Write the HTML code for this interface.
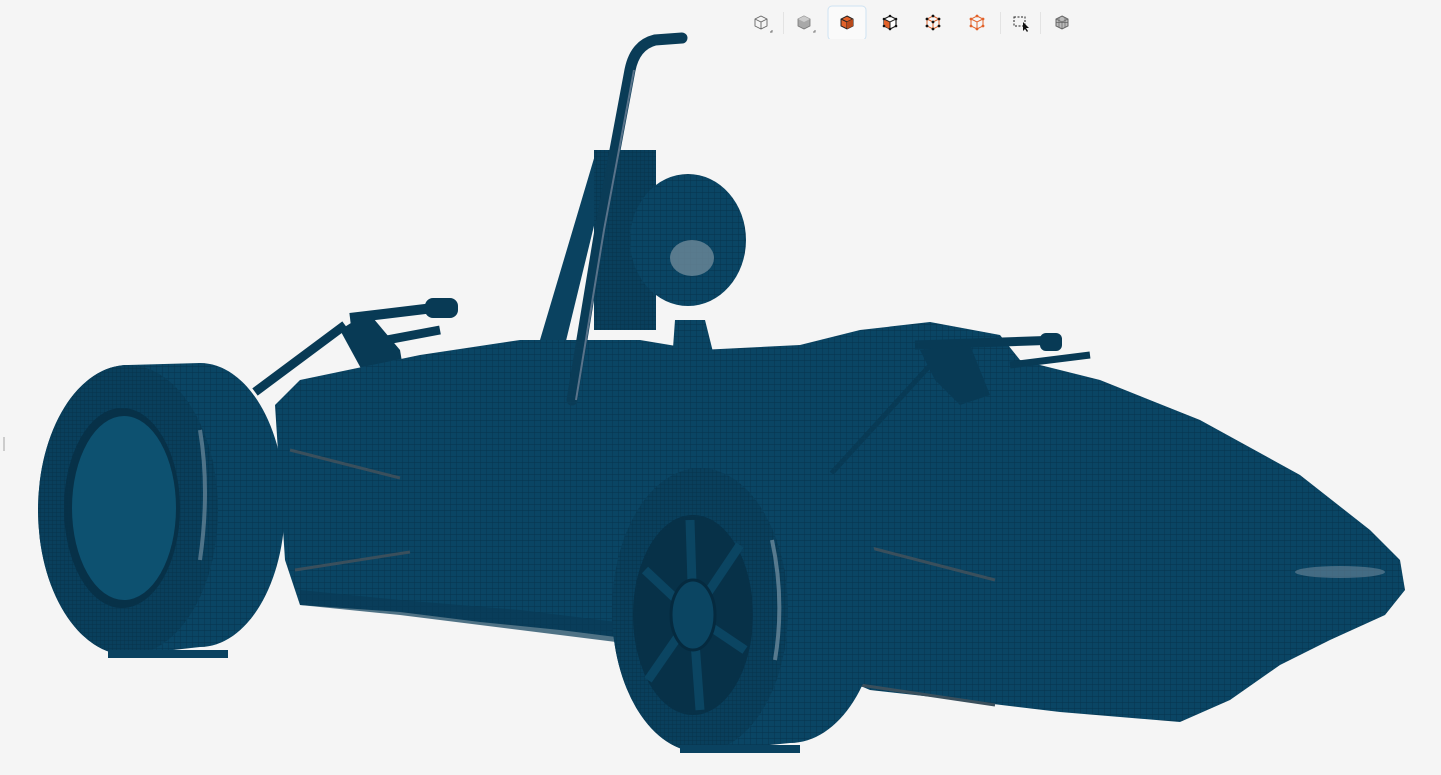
<!DOCTYPE html>
<html><head><meta charset="utf-8"><style>
html,body{margin:0;padding:0;background:#f5f5f5;width:1441px;height:775px;overflow:hidden;font-family:"Liberation Sans",sans-serif}
svg{position:absolute;left:0;top:0}
.tb{position:absolute;top:5px;height:34px}
</style></head><body>
<svg width="1441" height="775" viewBox="0 0 1441 775">
<defs>
<pattern id="m" width="6" height="6" patternUnits="userSpaceOnUse"><rect width="6" height="6" fill="#0a4564"/><path d="M0 0H6M0 0V6" stroke="#052c42" stroke-width="0.9" opacity="0.7"/></pattern>
<pattern id="m2" width="4" height="4" patternUnits="userSpaceOnUse"><rect width="4" height="4" fill="#093f5c"/><path d="M0 0H4M0 0V4" stroke="#04283c" stroke-width="0.7" opacity="0.7"/></pattern>
</defs>
<rect x="3" y="437" width="2" height="14" fill="#ccc"/>
<path d="M255 392 L345 325" stroke="#083a55" stroke-width="9"/>
<path d="M350 318 L450 306" stroke="#083a55" stroke-width="10"/>
<rect x="425" y="298" width="33" height="20" rx="8" fill="#083a55"/>
<path d="M360 345 L440 330" stroke="#083a55" stroke-width="9"/>
<path d="M340 330 L368 312 L400 350 L405 380 L370 385 Z" fill="#083a55"/>
<path d="M595 155 L540 340 L565 345 L610 160 Z" fill="#0a4260"/>
<rect x="594" y="150" width="62" height="180" fill="url(#m2)"/>
<path d="M275 405 L300 380 L420 355 L520 340 L640 340 L700 350 L800 345 L860 330 L930 322 L1000 335 L1020 360 L1100 380 L1200 420 L1300 475 L1370 530 L1400 560 L1405 590 L1385 615 L1330 640 L1280 665 L1230 700 L1180 722 L1060 712 L960 700 L870 690 L800 660 L720 640 L640 640 L560 630 L480 622 L400 612 L300 605 L285 560 Z" fill="url(#m)"/>
<path d="M300 590 L400 600 L520 610 L640 625 L640 645 L520 630 L400 615 L300 605 Z" fill="#083a55" opacity="0.7"/>
<path d="M830 475 L935 360" stroke="#083a55" stroke-width="5"/>
<path d="M915 345 L1060 340" stroke="#083a55" stroke-width="9"/>
<rect x="1040" y="333" width="22" height="18" rx="6" fill="#083a55"/>
<path d="M1010 365 L1090 355" stroke="#083a55" stroke-width="7"/>
<path d="M920 350 L970 345 L990 395 L960 405 L935 380 Z" fill="#083a55"/>
<path d="M860 545 L995 580" stroke="#3a4f5c" stroke-width="3"/>
<path d="M860 685 L995 705" stroke="#3a4f5c" stroke-width="3"/>
<path d="M290 450 L400 478" stroke="#3a4f5c" stroke-width="3"/>
<path d="M295 570 L410 552" stroke="#3a4f5c" stroke-width="3"/>
<ellipse cx="1340" cy="572" rx="45" ry="6" fill="#6a8799" opacity="0.6"/>
<path d="M675 320 L705 320 L715 360 L740 390 L700 400 L670 390 Z" fill="url(#m)"/>
<ellipse cx="688" cy="240" rx="58" ry="66" fill="url(#m)"/>
<ellipse cx="692" cy="258" rx="22" ry="18" fill="#6d8899" opacity="0.8"/>
<path d="M682 38 L655 40 Q635 45 630 70 L600 230 L572 400" stroke="#0a3c57" stroke-width="11" fill="none" stroke-linecap="round"/>
<path d="M634 70 L604 230 L576 400" stroke="#59738a" stroke-width="2" fill="none"/>
<path d="M128 365 L200 363 A85 142 0 0 1 200 647 L128 655 A90 145 0 0 1 128 365 Z" fill="url(#m)"/>
<ellipse cx="128" cy="510" rx="90" ry="145" fill="url(#m2)"/>
<ellipse cx="122" cy="508" rx="58" ry="100" fill="#073148"/>
<ellipse cx="124" cy="508" rx="52" ry="92" fill="#0d5170"/>
<path d="M200 430 Q210 490 200 560" stroke="#7f98a8" stroke-width="4" fill="none" opacity="0.6"/>
<rect x="108" y="650" width="120" height="8" fill="#0a4260"/>
<path d="M700 468 L790 457 A90 143 0 0 1 790 743 L700 752 A88 142 0 0 1 700 468 Z" fill="url(#m)"/>
<ellipse cx="700" cy="610" rx="88" ry="142" fill="url(#m2)"/>
<ellipse cx="693" cy="615" rx="60" ry="100" fill="#073148"/>
<g stroke="#0b4562" stroke-width="9">
<path d="M693 615 L690 520 M693 615 L740 545 M693 615 L745 650 M693 615 L700 710 M693 615 L648 680 M693 615 L645 570"/>
</g>
<ellipse cx="693" cy="615" rx="22" ry="35" fill="#0b4562" stroke="#052a3f" stroke-width="3"/>
<path d="M772 540 Q785 600 775 660" stroke="#8aa3b3" stroke-width="4" fill="none" opacity="0.6"/>
<rect x="680" y="745" width="120" height="8" fill="#0a4260"/>
</svg>
<svg class="tb" style="left:740px" width="340" height="34" viewBox="0 5 340 34">
<rect x="88" y="6" width="38" height="34" rx="4" fill="#fafafa" stroke="#cfe3f2"/>
<g stroke="#e3e3e3"><path d="M43.5 12V34M260.5 12V34M300.5 12V34"/></g>
<g fill="none" stroke="#666" stroke-width="0.9"><path d="M21 16 L27 19 L27 26 L21 29 L15 26 L15 19 Z M15 19 L21 22 L27 19 M21 22 V29"/><path d="M30 32 H32 V30"/></g>
<path d="M64 16 L70 19 L70 26 L64 29 L58 26 L58 19 Z" fill="#a8a8a8" stroke="#777" stroke-width="0.8"/><path d="M58 19 L64 22 L70 19 L64 16Z" fill="#ccc"/><path d="M73 32 H75 V30" stroke="#777" fill="none"/>
<path d="M107 16 L113 19 L113 26 L107 29 L101 26 L101 19 Z" fill="#e2622a" stroke="#222" stroke-width="1"/><path d="M101 19 L107 22 L113 19 M107 22 V29" stroke="#222" fill="none"/><path d="M107 22 L113 19 L113 26 L107 29Z" fill="#b84a1c"/>
<path d="M150 16 L156 19 L156 26 L150 29 L144 26 L144 19 Z" fill="#fff" stroke="#222" stroke-width="1.2"/><path d="M144 19 L150 22 L150 29 L144 26Z" fill="#e2622a"/><path d="M144 19 L150 22 L156 19 M150 22 V29" stroke="#222" fill="none"/>
<g fill="#111"><circle cx="150" cy="16" r="1.3"/><circle cx="156" cy="19" r="1.3"/><circle cx="156" cy="26" r="1.3"/><circle cx="150" cy="29" r="1.3"/><circle cx="144" cy="26" r="1.3"/><circle cx="144" cy="19" r="1.3"/></g>
<g fill="none" stroke="#e2622a" stroke-width="1"><path d="M193 16 L199 19 L199 26 L193 29 L187 26 L187 19 Z M187 19 L193 22 L199 19 M193 22 V29"/></g>
<g fill="#111"><circle cx="193" cy="16" r="1.4"/><circle cx="199" cy="19" r="1.4"/><circle cx="199" cy="26" r="1.4"/><circle cx="193" cy="29" r="1.4"/><circle cx="187" cy="26" r="1.4"/><circle cx="187" cy="19" r="1.4"/><circle cx="193" cy="22" r="1.4"/></g>
<g fill="none" stroke="#e2622a" stroke-width="1"><path d="M237 16 L243 19 L243 26 L237 29 L231 26 L231 19 Z M231 19 L237 22 L243 19 M237 22 V29"/></g>
<g fill="#e2622a"><circle cx="237" cy="16" r="1.4"/><circle cx="243" cy="19" r="1.4"/><circle cx="243" cy="26" r="1.4"/><circle cx="237" cy="29" r="1.4"/><circle cx="231" cy="26" r="1.4"/><circle cx="231" cy="19" r="1.4"/></g>
<rect x="274" y="17" width="11" height="9" fill="none" stroke="#222" stroke-dasharray="2 1.5"/><path d="M283 22 L283 31 L285 29 L287 32 L288 31 L286 28 L289 28 Z" fill="#111"/>
<path d="M322 16 L328 19 L328 26 L322 29 L316 26 L316 19 Z" fill="#bbb" stroke="#666"/><path d="M316 19 L322 22 L328 19 M322 22 V29 M319 17.5 V27.5 M325 17.5 V27.5 M316 22.5 L328 22.5" stroke="#666" fill="none" stroke-width="0.7"/>
</svg>
</body></html>
